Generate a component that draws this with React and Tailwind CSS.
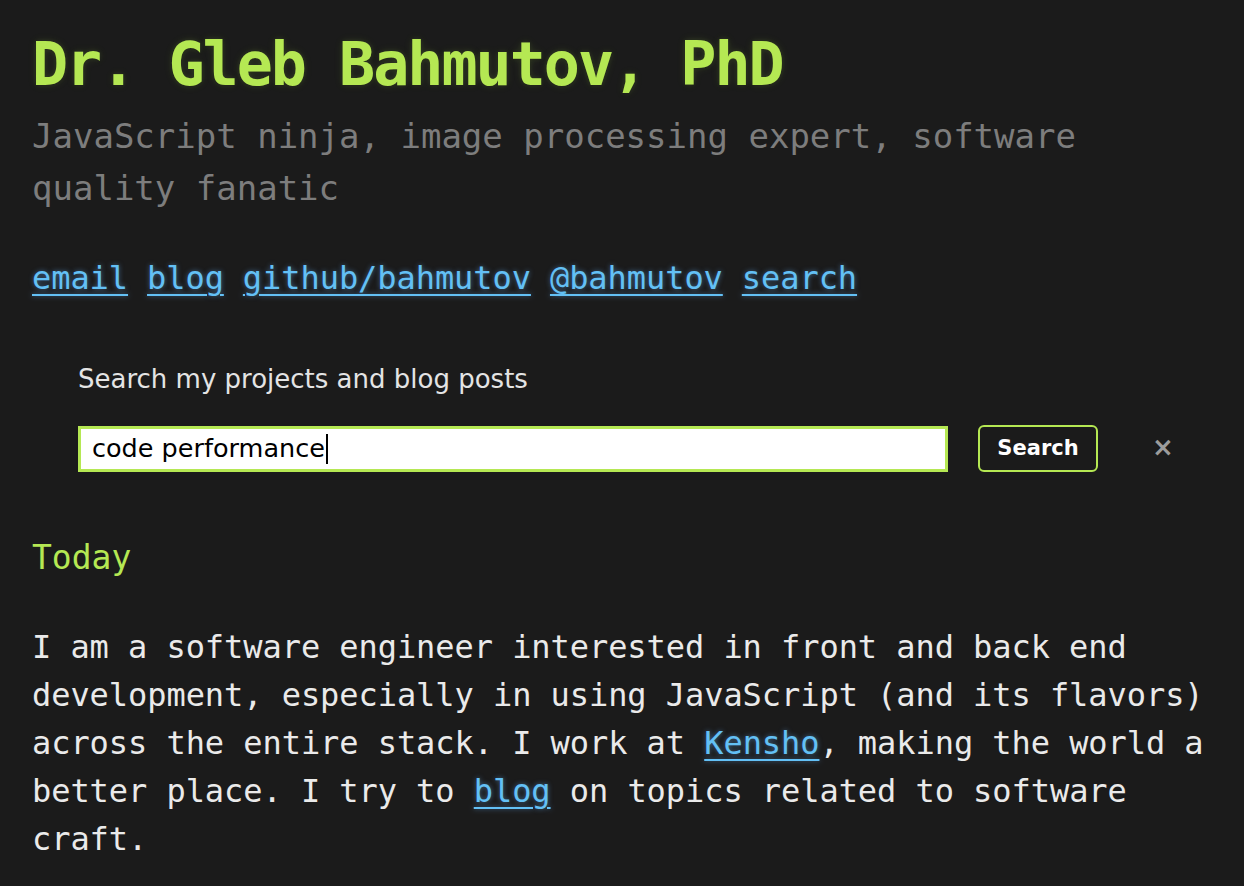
export default function App() {
  const mono = { fontFamily: '"DejaVu Sans Mono", "Liberation Mono", monospace' };
  const sans = { fontFamily: '"DejaVu Sans", Verdana, sans-serif' };
  const linkCls =
    "text-[#63c0f5] underline decoration-2 underline-offset-[5px] [text-shadow:0_0_5px_rgba(104,182,255,0.5)]";

  return (
    <div className="min-h-[886px] bg-[#1b1b1b] px-8 pb-8" style={mono}>
      <h1 className="pt-[28px] text-[60px] leading-[72px] font-bold tracking-[-2px] text-[#b5e853] [text-shadow:0_1px_1px_rgba(0,0,0,0.1),0_0_5px_rgba(181,232,83,0.1),0_0_10px_rgba(181,232,83,0.1)]">
        Dr. Gleb Bahmutov, PhD
      </h1>
      <h2 className="mt-[10px] max-w-[1100px] text-[34px] leading-[52px] text-[#7d7d7d]">
        JavaScript ninja, image processing expert, software quality fanatic
      </h2>

      <nav className="mt-[40px] flex gap-[19px] text-[32px] leading-[48px] tracking-[-0.06px]">
        <a href="#" className={linkCls}>email</a>
        <a href="#" className={linkCls}>blog</a>
        <a href="#" className={linkCls}>github/bahmutov</a>
        <a href="#" className={linkCls}>@bahmutov</a>
        <a href="#" className={linkCls}>search</a>
      </nav>

      <section className="mt-[62px] pl-[46px]" style={sans}>
        <p className="text-[26px] leading-[30px] text-[#e4e4e4]">Search my projects and blog posts</p>
        <div className="mt-[31px] flex items-center">
          <div className="flex h-[46px] w-[870px] items-center border-[3px] border-[#b5e853] bg-white px-[11px] text-[25.5px] text-black">
            <span>code performance</span>
            <span className="ml-[1px] h-[30px] w-[2px] bg-black" />
          </div>
          <button className="ml-[30px] h-[47px] w-[120px] rounded-[6px] border-2 border-[#b5e853] bg-[#1b1b1b] text-[21px] font-bold text-white">
            Search
          </button>
          <span className="ml-[54px] -mt-[4px] text-[26px] font-bold leading-none text-[#9c9c9c]">×</span>
        </div>
      </section>

      <h3 className="mt-[66px] text-[33px] leading-[40px] text-[#b5e853]">Today</h3>

      <p className="mt-[45px] text-[32px] leading-[48px] tracking-[-0.06px] text-[#eaeaea]">
        I am a software engineer interested in front and back end development, especially in using
        JavaScript (and its flavors) across the entire stack. I work at{" "}
        <a href="#" className={linkCls}>Kensho</a>, making the world a better place. I try to{" "}
        <a href="#" className={linkCls}>blog</a> on topics related to software craft.
      </p>
    </div>
  );
}
